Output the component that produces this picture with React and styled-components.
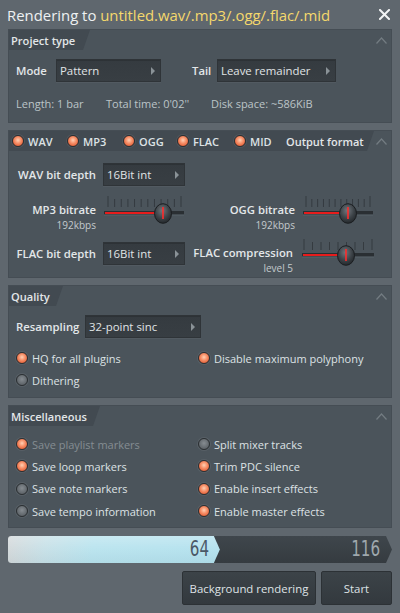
import React from 'react';
import styled, { createGlobalStyle } from 'styled-components';

const Global = createGlobalStyle`
  html, body { margin: 0; padding: 0; background: #5f676e; }
  body { font-family: "Open Sans", "Noto Sans", sans-serif; color: #dce1e4; }
  * { box-sizing: border-box; }
`;

const Window = styled.div`
  width: 400px;
  height: 613px;
  background: #5f676e;
  display: flex;
  flex-direction: column;
  padding: 0 8px 8px;
`;

const TitleBar = styled.div`
  height: 29px;
  flex: none;
  display: flex;
  align-items: center;
  justify-content: space-between;
  margin: 0 2px 0 -1px;
`;

const Title = styled.div`
  font-size: 14.9px;
  color: #eef1f2;
  white-space: nowrap;
  span { color: #f4d86c; }
`;

const CloseBtn = styled.svg`
  width: 11px;
  height: 11px;
  display: block;
`;

const Panel = styled.section`
  height: ${p => p.$h}px;
  flex: none;
  margin-top: ${p => p.$mt || 0}px;
  background: #4b545b;
  border: 1px solid #454d54;
  display: flex;
  flex-direction: column;
`;

const PanelHeader = styled.div`
  height: 20px;
  flex: none;
  display: flex;
  align-items: stretch;
  justify-content: space-between;
`;

const Tab = styled.div`
  width: ${p => p.$w}px;
  display: flex;
  align-items: center;
  padding-left: 2px;
  background: #424a51;
  clip-path: polygon(0 0, 100% 0, calc(100% - 7px) 100%, 0 100%);
  font-size: 11.1px;
  font-weight: 600;
  color: #e2e6e8;
  white-space: nowrap;
`;

const Chevron = styled.svg`
  width: 11px;
  height: 7px;
  align-self: center;
  margin-right: 4px;
`;

const Row = styled.div`
  display: flex;
  align-items: center;
  padding-left: ${p => p.$pl ?? 7}px;
  margin-top: ${p => p.$mt || 0}px;
  height: ${p => p.$h || 23}px;
`;

const Label = styled.div`
  width: ${p => p.$w}px;
  margin-left: ${p => p.$ml || 0}px;
  flex: none;
  font-size: 11.3px;
  font-weight: 600;
  color: #e3e7e9;
  white-space: nowrap;
`;

const Info = styled.div`
  width: ${p => p.$w ? p.$w + 'px' : 'auto'};
  flex: none;
  font-size: 11px;
  color: #bcc4c8;
  white-space: nowrap;
`;

const DropBox = styled.div`
  width: ${p => p.$w}px;
  height: 23px;
  flex: none;
  display: flex;
  align-items: center;
  justify-content: space-between;
  padding: 0 5px 0 3px;
  background: linear-gradient(180deg, #353b40 0%, #383e43 100%);
  border: 1px solid #2f3438;
  box-shadow: inset 0 1px 0 rgba(0, 0, 0, 0.15), 0 1px 0 rgba(255, 255, 255, 0.04);
  font-size: 11.4px;
  color: #e0e4e6;
  white-space: nowrap;
`;

const Arrow = styled.span`
  width: 0;
  height: 0;
  border-top: 4px solid transparent;
  border-bottom: 4px solid transparent;
  border-left: 4px solid #8a9297;
`;

function Dropdown({ w, children }) {
  return (
    <DropBox $w={w}>
      <span>{children}</span>
      <Arrow />
    </DropBox>
  );
}

const RadioDot = styled.span`
  width: 12px;
  height: 12px;
  flex: none;
  border-radius: 50%;
  border: 1.5px solid #2b2f32;
  box-shadow: 0 0 0 1px rgba(255, 255, 255, 0.07);
  background: ${p => p.$on
    ? 'radial-gradient(circle at 50% 42%, #ffd0b4 0%, #f7916a 40%, #e0582f 85%, #c44a26 100%)'
    : 'radial-gradient(circle at 50% 42%, #868c91 0%, #676d72 55%, #4f555a 100%)'};
`;

const RadioItem = styled.div`
  display: flex;
  align-items: center;
  gap: 4px;
  width: ${p => p.$w ? p.$w + 'px' : 'auto'};
  flex: none;
  font-size: 11px;
  color: ${p => p.$dim ? '#858d92' : '#dde2e5'};
  white-space: nowrap;
`;

function Radio({ on, dim, w, children }) {
  return (
    <RadioItem $w={w} $dim={dim}>
      <RadioDot $on={on} />
      <span>{children}</span>
    </RadioItem>
  );
}

const FormatTab = styled(Tab)`
  padding-left: 3px;
`;

const FormatTitle = styled.span`
  font-size: 11px;
  font-weight: 600;
  color: #e2e6e8;
`;

const FormatGrid = styled.div`
  display: grid;
  grid-template-columns: 80px 82px 103px 74px;
  grid-template-rows: 23px 37px 32px;
  column-gap: 7px;
  row-gap: 8px;
  padding: 12px 0 0 7px;
`;

const GridLabel = styled.div`
  text-align: right;
  font-size: 11.3px;
  font-weight: 600;
  color: #e3e7e9;
  white-space: nowrap;
  line-height: ${p => p.$lh || 16}px;
  padding-top: ${p => p.$pt || 0}px;
  margin-right: ${p => p.$mr || 0}px;
`;

const SubLabel = styled.div`
  font-size: 10px;
  font-weight: 400;
  line-height: 13px;
  margin-top: 1px;
  color: #c3cacd;
`;

const Cell = styled.div`
  display: flex;
  align-items: center;
  justify-content: flex-end;
  height: 23px;
  margin-top: ${p => p.$mt || 0}px;
`;

const SliderSvg = styled.svg`
  display: block;
  overflow: visible;
`;

function Slider({ w, h, ticks, t0, t1, tickTop, tickBottom, trackY, knob, id }) {
  const xs = Array.from({ length: ticks }, (_, i) => t0 + ((t1 - t0) * i) / (ticks - 1));
  return (
    <SliderSvg width={w} height={h} viewBox={`0 0 ${w} ${h}`}>
      <defs>
        <radialGradient id={`k${id}`} cx="45%" cy="35%" r="70%">
          <stop offset="0%" stopColor="#70777d" />
          <stop offset="55%" stopColor="#3e4449" />
          <stop offset="100%" stopColor="#1f2326" />
        </radialGradient>
      </defs>
      {xs.map((x, i) => (
        <line
          key={i}
          x1={x}
          x2={x}
          y1={i === 0 || i === ticks - 1 ? tickTop - 1 : tickTop + 2}
          y2={tickBottom}
          stroke="#353b40"
          strokeWidth="1"
        />
      ))}
      <rect x="1" y={trackY - 2} width={w - 2} height="3.5" fill="#2a2f33" />
      <rect x="1" y={trackY + 1.5} width={w - 2} height="1" fill="#66707a" opacity="0.5" />
      <rect x="2" y={trackY - 1} width={knob - 2} height="2" fill="#e61c1c" />
      <ellipse cx={knob} cy={trackY + 0.5} rx="8.5" ry="9.8" fill={`url(#k${id})`} stroke="#1b1e21" strokeWidth="1" />
      <line x1={knob} x2={knob} y1={trackY - 6} y2={trackY + 6} stroke="#ff2b2b" strokeWidth="1.6" />
    </SliderSvg>
  );
}

const SliderCell = styled.div`
  display: flex;
  justify-content: flex-start;
  margin-left: ${p => p.$ml || 0}px;
`;

const TwoCol = styled.div`
  display: grid;
  grid-template-columns: 182px 1fr;
  grid-auto-rows: ${p => p.$row}px;
  padding-left: 7px;
  margin-top: ${p => p.$mt || 0}px;
  align-items: center;
`;

const ProgressTrack = styled.div`
  height: 27px;
  flex: none;
  margin-top: 8px;
  display: flex;
  align-items: stretch;
  border-radius: 3px 0 0 3px;
  background: linear-gradient(180deg, #3f464c 0%, #3a4146 50%, #353b40 100%);
  clip-path: polygon(0 0, calc(100% - 6px) 0, 100% 50%, calc(100% - 6px) 100%, 0 100%);
`;

const ProgressFill = styled.div`
  flex: none;
  display: flex;
  align-items: center;
  justify-content: flex-end;
  padding-right: 11px;
  border-radius: 3px 0 0 3px;
  background:
    linear-gradient(180deg, rgba(255, 255, 255, 0.25) 0%, rgba(255, 255, 255, 0.06) 45%, rgba(0, 0, 0, 0.03) 100%),
    linear-gradient(100deg, #d3d8da 0%, #c6e0e7 18%, #b8e3ee 40%, #b2e1ee 100%);
  clip-path: polygon(0 0, calc(100% - 6px) 0, 100% 50%, calc(100% - 6px) 100%, 0 100%);
`;

const Count = styled.span`
  font-family: "Liberation Sans Narrow", "DejaVu Sans Condensed", "Liberation Sans", sans-serif;
  font-size: 21px;
  display: inline-block;
  transform: scaleX(0.8);
  transform-origin: right center;
  color: ${p => p.$light ? '#9fa8ad' : '#4b5866'};
  line-height: 1;
`;

const Spacer = styled.div`
  flex: 1;
`;

const TotalWrap = styled.div`
  display: flex;
  align-items: center;
  padding-right: 12px;
`;

const Buttons = styled.div`
  display: flex;
  justify-content: flex-end;
  gap: 5px;
  margin-top: 8px;
  height: 34px;
  flex: none;
`;

const Button = styled.button`
  width: ${p => p.$w}px;
  height: 34px;
  background: linear-gradient(180deg, #3c4348 0%, #33393e 100%);
  border: 1px solid #2c3135;
  border-radius: 2px;
  font-family: inherit;
  font-size: 11.4px;
  color: #dfe3e6;
  padding: 0;
`;

const ChevronIcon = () => (
  <Chevron viewBox="0 0 11 7">
    <path d="M0.5 6.5 L5.5 1 L10.5 6.5" fill="none" stroke="#737c82" strokeWidth="1.2" />
  </Chevron>
);

export default function App() {
  const rendered = 64;
  const total = 116;
  const fillPct = (rendered / total) * 100;
  return (
    <>
      <Global />
      <Window>
        <TitleBar>
          <Title>
            Rendering to <span>untitled.wav/.mp3/.ogg/.flac/.mid</span>
          </Title>
          <CloseBtn viewBox="0 0 11 11">
            <path d="M1 1 L10 10 M10 1 L1 10" stroke="#f2f4f5" strokeWidth="2" strokeLinecap="square" />
          </CloseBtn>
        </TitleBar>

        <Panel $h={94}>
          <PanelHeader>
            <Tab $w={81}>Project type</Tab>
            <ChevronIcon />
          </PanelHeader>
          <Row $mt={9}>
            <Label $w={40}>Mode</Label>
            <Dropdown w={105}>Pattern</Dropdown>
            <Label $w={25} $ml={31}>Tail</Label>
            <Dropdown w={119}>Leave remainder</Dropdown>
          </Row>
          <Row $mt={13} $h={16}>
            <Info $w={90}>Length: 1 bar</Info>
            <Info $w={105}>Total time: 0'02''</Info>
            <Info>Disk space: ~586KiB</Info>
          </Row>
        </Panel>

        <Panel $h={148} $mt={7}>
          <PanelHeader>
            <FormatTab $w={365}>
              <Radio on w={55}>WAV</Radio>
              <Radio on w={56}>MP3</Radio>
              <Radio on w={54}>OGG</Radio>
              <Radio on w={57}>FLAC</Radio>
              <Radio on w={52}>MID</Radio>
              <FormatTitle>Output format</FormatTitle>
            </FormatTab>
            <ChevronIcon />
          </PanelHeader>
          <FormatGrid>
            <GridLabel $lh={23}>WAV bit depth</GridLabel>
            <Dropdown w={82}>16Bit int</Dropdown>
            <div />
            <div />

            <GridLabel $pt={8}>
              MP3 bitrate
              <SubLabel>192kbps</SubLabel>
            </GridLabel>
            <SliderCell>
              <Slider id="mp3" w={82} h={37} ticks={12} t0={5} t1={78} tickTop={3} tickBottom={13} trackY={19} knob={60} />
            </SliderCell>
            <GridLabel $pt={8}>
              OGG bitrate
              <SubLabel>192kbps</SubLabel>
            </GridLabel>
            <SliderCell>
              <Slider id="ogg" w={72} h={37} ticks={12} t0={4} t1={68} tickTop={3} tickBottom={13} trackY={19} knob={46} />
            </SliderCell>

            <Cell $mt={3}>
              <GridLabel $lh={23}>FLAC bit depth</GridLabel>
            </Cell>
            <Cell $mt={3}>
              <Dropdown w={82}>16Bit int</Dropdown>
            </Cell>
            <GridLabel $pt={6} $mr={2}>
              FLAC compression
              <SubLabel>level 5</SubLabel>
            </GridLabel>
            <SliderCell $ml={-1}>
              <Slider id="flac" w={74} h={32} ticks={9} t0={3} t1={71} tickTop={1} tickBottom={11} trackY={16} knob={45} />
            </SliderCell>
          </FormatGrid>
        </Panel>

        <Panel $h={113} $mt={7}>
          <PanelHeader>
            <Tab $w={54}>Quality</Tab>
            <ChevronIcon />
          </PanelHeader>
          <Row $mt={9}>
            <Label $w={69}>Resampling</Label>
            <Dropdown w={116}>32-point sinc</Dropdown>
          </Row>
          <TwoCol $row={22} $mt={9}>
            <Radio on>HQ for all plugins</Radio>
            <Radio on>Disable maximum polyphony</Radio>
            <Radio>Dithering</Radio>
          </TwoCol>
        </Panel>

        <Panel $h={123} $mt={7}>
          <PanelHeader>
            <Tab $w={91}>Miscellaneous</Tab>
            <ChevronIcon />
          </PanelHeader>
          <TwoCol $row={22.3} $mt={7}>
            <Radio on dim>Save playlist markers</Radio>
            <Radio>Split mixer tracks</Radio>
            <Radio on>Save loop markers</Radio>
            <Radio on>Trim PDC silence</Radio>
            <Radio>Save note markers</Radio>
            <Radio on>Enable insert effects</Radio>
            <Radio>Save tempo information</Radio>
            <Radio on>Enable master effects</Radio>
          </TwoCol>
        </Panel>

        <ProgressTrack>
          <ProgressFill style={{ width: `${fillPct}%` }}>
            <Count>{rendered}</Count>
          </ProgressFill>
          <Spacer />
          <TotalWrap>
            <Count $light>{total}</Count>
          </TotalWrap>
        </ProgressTrack>

        <Buttons>
          <Button $w={134}>Background rendering</Button>
          <Button $w={71}>Start</Button>
        </Buttons>
      </Window>
    </>
  );
}
